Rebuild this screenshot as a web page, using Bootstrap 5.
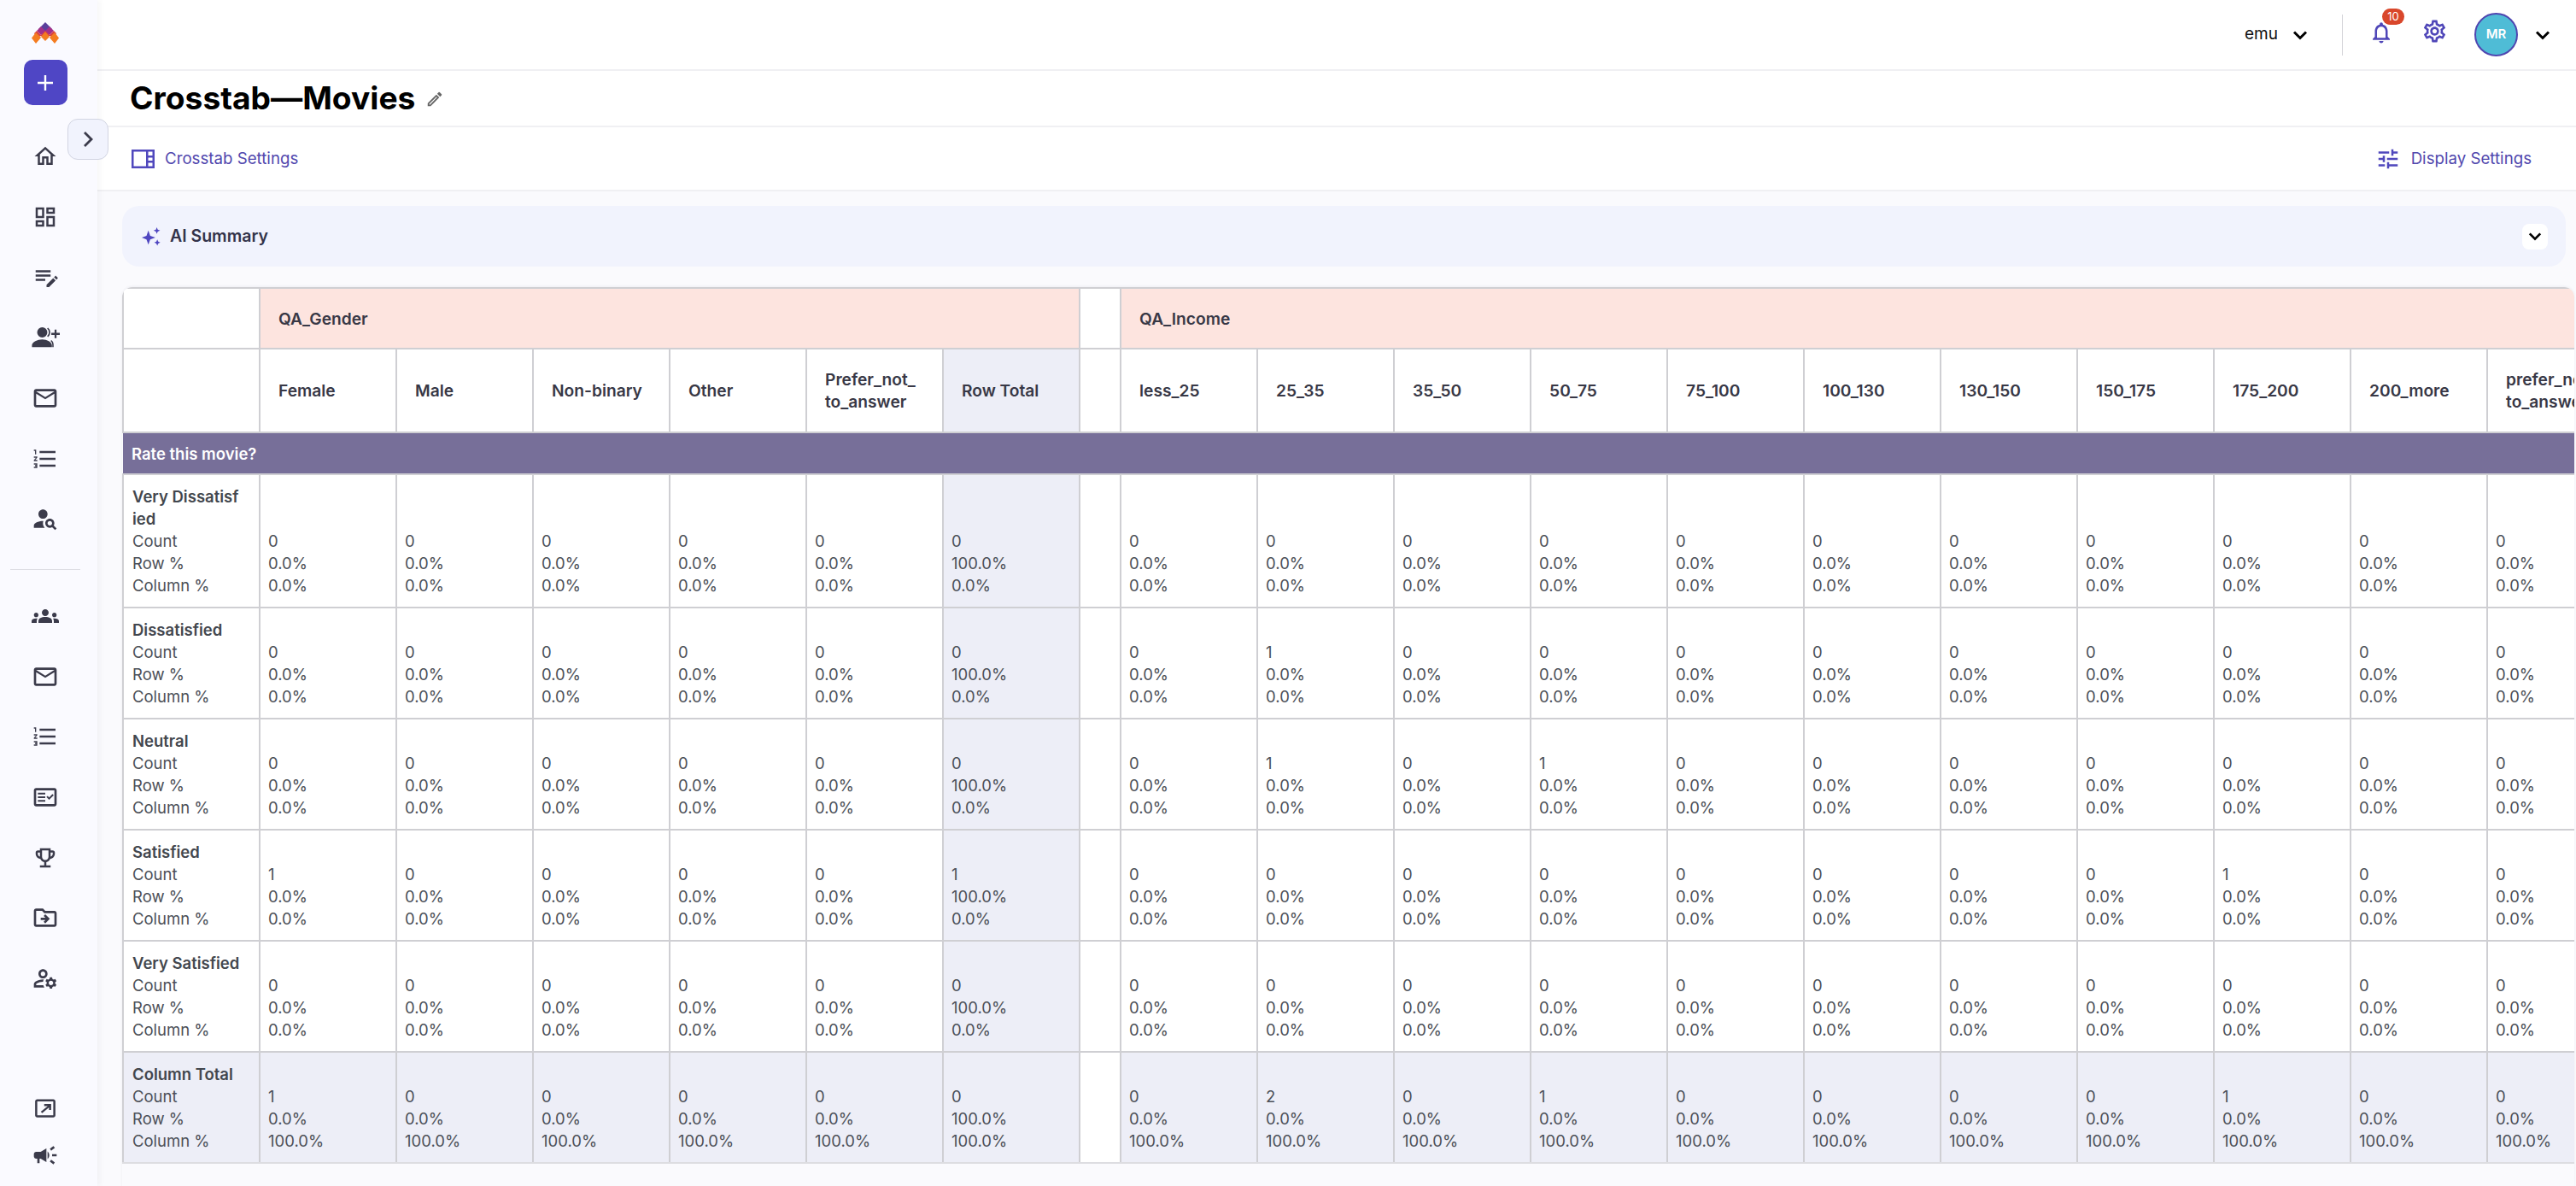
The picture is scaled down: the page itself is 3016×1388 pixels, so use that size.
<!DOCTYPE html>
<html lang="en">
<head>
  <meta charset="UTF-8" />
  <meta name="viewport" content="width=device-width, initial-scale=1" />
  <title>Crosstab - Movies</title>
  <link href="https://cdn.jsdelivr.net/npm/bootstrap@5.3.0/dist/css/bootstrap.min.css" rel="stylesheet" />
  <style>
    html, body { height: 100%; }
    body {
      font-family: Inter, "Liberation Sans", sans-serif;
      font-size: 18px;
      background: #fafafd;
      overflow: hidden;
    }
    .app-wrap { height: 1388px; }

    /* sidebar */
    .side-rail {
      width: 114px;
      flex: 0 0 114px;
      background: #fafaff;
      box-shadow: 2px 0 8px rgba(30, 30, 60, .05);
      padding-top: 26px;
      padding-bottom: 9px;
      padding-right: 8px;
      position: relative;
      z-index: 2;
    }
    .logo-box { width: 32px; height: 25px; display: block; }
    .add-btn {
      width: 51px;
      height: 53px;
      margin-top: 19px;
      margin-bottom: 25px;
      background: #4f46c5;
      border-radius: 10px;
      border: 0;
    }
    .rail-item { height: 70.67px; color: #3b3b4b; }
    .rail-item svg, .rail-foot svg { fill: currentColor; }
    .rail-foot { height: 55px; color: #3b3b4b; }
    .rail-line { width: 82px; height: 1px; background: #dedee4; margin: 23px 0 19px; }
    .rail-toggle {
      position: absolute;
      left: 79px;
      top: 139px;
      width: 48px;
      height: 48px;
      background: #f1f3fd;
      border: 1px solid #d2d5e2;
      border-radius: 12px;
      padding: 0 0 4px;
    }

    /* header rows */
    .main-col { min-width: 0; }
    .top-strip { height: 84px; background: #fff; border-bottom: 2px solid #f0f0f3; padding-right: 30px; }
    .tenant-name { color: #111; font-size: 19px; font-weight: 400; margin-right: 17px; }
    .strip-sep { width: 1px; height: 48px; background: #d4d4d8; margin: 0 30px 0 40px; }
    .bell-box { position: relative; width: 30px; height: 30px; margin-top: -6px; color: #4f46b8; }
    .bell-count {
      position: absolute;
      left: 16px;
      top: -13px;
      width: 26px;
      height: 19px;
      border-radius: 10px;
      background: #d9472b;
      color: #fff;
      font-size: 13px;
      line-height: 19px;
      text-align: center;
    }
    .gear-box { color: #4f46b8; margin: -8px 0 0 32px; }
    .avatar-dot {
      width: 51px;
      height: 51px;
      margin: 0 20px 0 31px;
      border-radius: 50%;
      background: #4fbcd6;
      border: 2px solid #4f46b0;
      color: #fff;
      font-size: 15px;
      font-weight: 600;
    }
    .title-strip { height: 66px; background: #fff; border-bottom: 2px solid #f0f0f3; padding-left: 38px; }
    .page-title { font-size: 37.2px; font-weight: 700; color: #000; margin: 0; }
    .pencil-ic { color: #666; margin-left: 12px; margin-top: 2px; }
    .tool-strip { height: 76px; background: #fff; border-bottom: 2px solid #f0f0f3; padding: 0 52px 0 40px; }
    .tool-link { color: #5148ae; font-size: 18.7px; text-decoration: none; }
    .tool-link svg { fill: #5048bd; }

    /* content */
    .content-pane { padding: 17px 12px 0 29px; background: #fafafd; flex: 1 1 auto; min-height: 0; }
    .ai-box {
      height: 71px;
      background: #f1f3fd;
      border-radius: 20px;
      padding: 0 21px 0 23px;
      margin-bottom: 24px;
    }
    .ai-label { font-size: 19.5px; font-weight: 600; color: #33334a; margin-left: 11px; }
    .ai-toggle {
      width: 30px;
      height: 30px;
      background: #fff;
      border: 0;
      border-radius: 8px;
      padding: 0;
    }
    .tab-shell {
      margin-right: -10px;
      height: 1060px;
      overflow: hidden;
      border-radius: 12px 12px 0 0;
      box-shadow: 0 -1px 3px rgba(40, 40, 60, .06);
    }
    .table.xtab {
      --bs-table-bg: #fff;
      table-layout: fixed;
      width: 2928px;
      margin: 0;
      border-collapse: collapse;
      font-size: 18.5px;
      line-height: 26px;
    }
    .table.xtab th, .table.xtab td {
      border: 2px solid #cfcfd3;
      padding: 12px 9px;
      font-weight: 400;
      word-break: break-all;
      vertical-align: bottom;
      color: #4c5058;
    }
    .table.xtab .grp-head th, .table.xtab .col-head th {
      vertical-align: middle;
      padding: 0 21px;
      font-size: 19.2px;
      font-weight: 600;
      color: #383846;
      word-break: normal;
      overflow-wrap: anywhere;
    }
    .table.xtab .grp-head th { height: 71px; }
    .table.xtab .col-head th { height: 98px; }
    .table.xtab .rate-row td {
      --bs-table-bg: #776f99;
      height: 49px;
      padding: 0 10px;
      vertical-align: middle;
      font-weight: 600;
      color: #fff;
      border-left: 0;
      border-right: 0;
    }
    .table.xtab td.row-label { padding-left: 10px; padding-right: 19px; }
    .table.xtab .row-label b { font-weight: 600; color: #43474e; display: block; }
    .table.xtab .tone-pink { --bs-table-bg: #fde4df; }
    .table.xtab .tone-total { --bs-table-bg: #edeef7; }
    .table.xtab tr:last-child td { border-bottom-color: #dddde1; }
  </style>
</head>
<body>
  <svg class="d-none" xmlns="http://www.w3.org/2000/svg">
    <symbol id="i-home" viewBox="0 0 24 24"><path d="M12 5.69l5 4.5V18h-2v-6H9v6H7v-7.81l5-4.5M12 3L2 12h3v8h6v-6h2v6h6v-8h3L12 3z"/></symbol>
    <symbol id="i-dash" viewBox="0 0 24 24"><path d="M19 5v2h-4V5h4M9 5v6H5V5h4m10 8v6h-4v-6h4M9 17v2H5v-2h4M21 3h-8v6h8V3zM11 3H3v10h8V3zm10 8h-8v10h8V11zm-10 4H3v6h8v-6z"/></symbol>
    <symbol id="i-note" viewBox="0 0 24 24"><path d="M3 5h14v2H3zM3 9h14v2H3zM3 13h9v2H3zM13.2 20.8v-2.3l6.2-6.2 2.3 2.3-6.2 6.2zM20.2 11.500l1-1c.3-.3.7-.3 1 0l1.3 1.3c.3.3.3.7 0 1l-1 1z"/></symbol>
    <symbol id="i-adduser" viewBox="0 0 24 24"><path d="M9.500 12a4.200 4.200 0 1 0 0-8.400a4.200 4.200 0 0 0 0 8.400zM1 20v-1.700c0-2.600 4.600-4.800 8.500-4.800s8 2.200 8 4.800V20zM14.300 3.800a5 5 0 0 1 0 7.800l-.8-.8a4 4 0 0 0 0-6.200zM17 14.200c1.200.8 1.900 2.100 1.900 3.800v2h-1.100v-2c0-1.300-.5-2.300-1.400-3zM19.700 5.500h1.600v2.700H24v1.600h-2.700v2.700h-1.600V9.800H17V8.200h2.700z"/></symbol>
    <symbol id="i-mail" viewBox="0 0 24 24"><path d="M20 4H4c-1.100 0-2 .9-2 2v12c0 1.100.9 2 2 2h16c1.100 0 2-.9 2-2V6c0-1.100-.9-2-2-2zm0 14H4V8l8 5 8-5v10zm-8-7L4 6h16l-8 5z"/></symbol>
    <symbol id="i-numlist" viewBox="0 0 24 24"><path d="M2 17h2v.5H3v1h1v.5H2v1h3v-4H2v1zm1-9h1V4H2v1h1v3zm-1 3h1.800L2 13.100v.9h3v-1H3.200L5 10.900V10H2v1zm5-6v2h14V5H7zm0 14h14v-2H7v2zm0-6h14v-2H7v2z"/></symbol>
    <symbol id="i-usersearch" viewBox="0 0 24 24"><path d="M10 12c2.210 0 4-1.790 4-4s-1.790-4-4-4-4 1.790-4 4 1.790 4 4 4zM10.350 14.010C7.620 13.910 2 15.270 2 18v2h9.540c-2.470-2.760-1.230-5.890-1.190-5.990zM19.430 18.020c.36-.59.57-1.280.57-2.020 0-2.210-1.790-4-4-4s-4 1.790-4 4 1.790 4 4 4c.74 0 1.430-.22 2.020-.57L20.590 22 22 20.590l-2.570-2.570zM16 18c-1.100 0-2-.9-2-2s.9-2 2-2 2 .9 2 2-.9 2-2 2z"/></symbol>
    <symbol id="i-groups" viewBox="0 0 24 24"><path d="M12 12.750c1.630 0 3.070.39 4.240.9 1.080.48 1.760 1.560 1.760 2.730V18H6v-1.610c0-1.180.68-2.260 1.760-2.730 1.170-.52 2.610-.91 4.240-.91zM4 13c1.100 0 2-.9 2-2s-.9-2-2-2-2 .9-2 2 .9 2 2 2zm1.130 1.100c-.37-.06-.74-.1-1.130-.1-.99 0-1.930.21-2.780.58C.48 14.900 0 15.620 0 16.430V18h4.500v-1.610c0-.83.23-1.610.63-2.290zM20 13c1.100 0 2-.9 2-2s-.9-2-2-2-2 .9-2 2 .9 2 2 2zm4 3.430c0-.81-.48-1.530-1.220-1.850-.85-.37-1.790-.58-2.780-.58-.39 0-.76.04-1.130.1.4.68.63 1.460.63 2.290V18H24v-1.570zM12 6c1.660 0 3 1.340 3 3s-1.340 3-3 3-3-1.340-3-3 1.340-3 3-3z"/></symbol>
    <symbol id="i-task" viewBox="0 0 24 24"><path d="M20 4H4c-1.100 0-2 .9-2 2v12c0 1.100.9 2 2 2h16c1.100 0 2-.9 2-2V6c0-1.100-.9-2-2-2zm0 14H4V6h16v12zM5.500 8H12v1.500H5.500zM5.500 11.200H12v1.500H5.500zM5.500 14.500H12V16H5.500zM19.400 10.300l-1.100-1.100-2.900 2.900-1.300-1.300-1.100 1.100 2.400 2.400z"/></symbol>
    <symbol id="i-cup" viewBox="0 0 24 24"><path d="M19 5h-2V3H7v2H5c-1.100 0-2 .9-2 2v1c0 2.550 1.920 4.630 4.390 4.940.63 1.500 1.980 2.630 3.610 2.960V19H7v2h10v-2h-4v-3.100c1.630-.33 2.980-1.460 3.610-2.960C19.080 12.630 21 10.550 21 8V7c0-1.100-.9-2-2-2zM5 8V7h2v3.820C5.840 10.400 5 9.300 5 8zm7 6c-1.650 0-3-1.350-3-3V5h6v6c0 1.650-1.350 3-3 3zm7-6c0 1.300-.84 2.400-2 2.820V7h2v1z"/></symbol>
    <symbol id="i-folder" viewBox="0 0 24 24"><path d="M20 6h-8l-2-2H4c-1.100 0-2 .9-2 2v12c0 1.100.9 2 2 2h16c1.100 0 2-.9 2-2V8c0-1.100-.9-2-2-2zm0 12H4V6h5.170l2 2H20v10zM12.160 12H8v2h4.160l-1.590 1.590L11.990 17 16 13l-4.010-4-1.410 1.410z"/></symbol>
    <symbol id="i-usergear" viewBox="0 0 24 24"><path d="M4 18v-.65c0-.34.16-.66.41-.81C6.100 15.530 8.030 15 10 15c.03 0 .05 0 .08.01.1-.7.3-1.370.59-1.980-.22-.02-.44-.03-.67-.03-2.420 0-4.680.67-6.610 1.820-.88.52-1.390 1.500-1.390 2.530V20h9.260c-.42-.6-.75-1.280-.97-2H4zM10 12c2.210 0 4-1.790 4-4s-1.790-4-4-4-4 1.790-4 4 1.790 4 4 4zm0-6c1.100 0 2 .9 2 2s-.9 2-2 2-2-.9-2-2 .9-2 2-2zM20.750 16c0-.22-.03-.42-.06-.63l1.140-1.010-1-1.730-1.450.49c-.32-.27-.68-.48-1.080-.63L18 11h-2l-.3 1.490c-.4.15-.76.36-1.080.63l-1.450-.49-1 1.730 1.140 1.010c-.03.21-.06.41-.06.63s.03.42.06.63l-1.140 1.010 1 1.730 1.450-.49c.32.27.68.48 1.080.63L16 21h2l.3-1.490c.4-.15.76-.36 1.080-.63l1.450.49 1-1.730-1.140-1.010c.03-.21.06-.41.06-.63zM17 18c-1.100 0-2-.9-2-2s.9-2 2-2 2 .9 2 2-.9 2-2 2z"/></symbol>
    <symbol id="i-export" viewBox="0 0 24 24"><path d="M4.500 3.500h15c1.100 0 2 .9 2 2v13c0 1.100-.9 2-2 2h-15c-1.100 0-2-.9-2-2v-13c0-1.100.9-2 2-2zm0 2v13h15v-13zM7.800 15.200l6.500-5.200h-3.300V8h6.500v5.500h-2v-2.300l-6.400 5.300z"/></symbol>
    <symbol id="i-horn" viewBox="0 0 24 24"><path d="M18 11v2h4v-2h-4zm-2 6.610c.96.71 2.210 1.650 3.200 2.390.4-.53.8-1.070 1.200-1.600-.99-.74-2.240-1.680-3.200-2.400-.4.54-.8 1.080-1.200 1.610zM20.400 5.600c-.4-.53-.8-1.070-1.200-1.600-.99.74-2.240 1.680-3.200 2.400.4.53.8 1.070 1.200 1.600.96-.72 2.210-1.650 3.200-2.400zM4 9c-1.100 0-2 .9-2 2v2c0 1.100.9 2 2 2h1v4h2v-4h1l5 3V6L8 9H4zm11.500 3c0-1.330-.58-2.530-1.500-3.350v6.690c.92-.81 1.500-2.010 1.500-3.340z"/></symbol>
    <symbol id="i-tune" viewBox="0 0 24 24"><path d="M3 17v2h6v-2H3zM3 5v2h10V5H3zm10 16v-2h8v-2h-8v-2h-2v6h2zM7 9v2H3v2h4v2h2V9H7zm14 4v-2H11v2h10zm-6-4h2V7h4V5h-4V3h-2v6z"/></symbol>
    <symbol id="i-panel" viewBox="0 0 27 22"><path d="M0 0h27v22H0zm2.500 2.500v17H17v-17zm17 0V7H24.500V2.500zm0 7v3.500H24.500V9.500zm0 6v4H24.500v-4z" fill-rule="evenodd"/></symbol>
    <symbol id="i-bell" viewBox="0 0 24 24"><path d="M12 22c1.100 0 2-.9 2-2h-4c0 1.100.9 2 2 2zm6-6v-5c0-3.070-1.630-5.640-4.500-6.320V4c0-.83-.67-1.500-1.500-1.500s-1.500.67-1.500 1.500v.68C7.640 5.360 6 7.920 6 11v5l-2 2v1h16v-1l-2-2zm-2 1H8v-6c0-2.480 1.510-4.500 4-4.500s4 2.020 4 4.500v6z"/></symbol>
    <symbol id="i-gear" viewBox="0 0 24 24"><path d="M19.430 12.980c.04-.32.07-.64.07-.98 0-.34-.03-.66-.07-.98l2.110-1.650c.19-.15.24-.42.12-.64l-2-3.460c-.09-.16-.26-.25-.44-.25-.06 0-.12.01-.17.03l-2.490 1c-.52-.4-1.080-.73-1.690-.98l-.38-2.650C14.460 2.180 14.250 2 14 2h-4c-.25 0-.46.18-.49.42l-.38 2.650c-.61.25-1.170.59-1.690.98l-2.490-1c-.06-.02-.12-.03-.18-.03-.17 0-.34.09-.43.25l-2 3.460c-.13.22-.07.49.12.64l2.110 1.650c-.04.32-.07.65-.07.98 0 .33.03.66.07.98l-2.110 1.650c-.19.15-.24.42-.12.64l2 3.460c.09.16.26.25.44.25.06 0 .12-.01.17-.03l2.490-1c.52.4 1.080.73 1.690.98l.38 2.650c.03.24.24.42.49.42h4c.25 0 .46-.18.49-.42l.38-2.650c.61-.25 1.170-.59 1.690-.98l2.490 1c.06.02.12.03.18.03.17 0 .34-.09.43-.25l2-3.460c.12-.22.07-.49-.12-.64l-2.110-1.650zm-1.980-1.710c.04.31.05.52.05.73 0 .21-.02.43-.05.73l-.14 1.130.89.7 1.080.84-.7 1.210-1.270-.51-1.040-.42-.9.68c-.43.32-.84.56-1.250.73l-1.060.43-.16 1.130-.2 1.350h-1.400l-.19-1.350-.16-1.130-1.060-.43c-.43-.18-.83-.41-1.230-.71l-.91-.7-1.060.43-1.270.51-.7-1.210 1.080-.84.89-.7-.14-1.130c-.03-.31-.05-.54-.05-.74s.02-.43.05-.73l.14-1.130-.89-.7-1.080-.84.7-1.210 1.270.51 1.040.42.9-.68c.43-.32.84-.56 1.250-.73l1.060-.43.16-1.130.2-1.350h1.390l.19 1.350.16 1.130 1.060.43c.43.18.83.41 1.230.71l.91.7 1.060-.43 1.270-.51.7 1.210-1.070.85-.89.7.14 1.130zM12 8c-2.210 0-4 1.790-4 4s1.790 4 4 4 4-1.790 4-4-1.790-4-4-4zm0 6c-1.100 0-2-.9-2-2s.9-2 2-2 2 .9 2 2-.9 2-2 2z"/></symbol>
    <symbol id="i-pencil" viewBox="0 0 24 24"><path d="M3 17.250V21h3.750L17.810 9.940l-3.750-3.750L3 17.250zM5.920 19H5v-.92l9.060-9.060.92.92L5.920 19zM20.710 7.040a1 1 0 0 0 0-1.410l-2.340-2.340a1 1 0 0 0-1.410 0l-1.830 1.830 3.750 3.750 1.830-1.830z"/></symbol>
    <symbol id="i-spark" viewBox="0 0 20 20"><path d="M7 3.500l2 5.500 5.500 2-5.500 2-2 5.500L5 13l-5-2 5-2zM16 0l1 2.500 2.500 1-2.500 1-1 2.500-1-2.500-2.500-1 2.500-1zM16.500 13l1 2.200 2.200 1-2.200 1-1 2.300-1-2.300-2.200-1 2.200-1z"/></symbol>
    <symbol id="i-down" viewBox="0 0 18 12"><path d="M2 2.500l7 7 7-7" fill="none" stroke="currentColor" stroke-width="3"/></symbol>
  </svg>

  <div class="app-wrap d-flex">
    <aside class="side-rail d-flex flex-column align-items-center">
      <svg class="logo-box" viewBox="0 0 32 25">
        <polygon points="16,0 24,8 16,16 8,8" fill="#5a3f9c"/>
        <polygon points="11,5 16,10 21,5 26,10 21,15 16,12 11,15 6,10" fill="#a32f88"/>
        <polygon points="6,10 11,15 16,10 21,15 26,10 29,13 26,18 21,16 16,18 11,16 6,18 3,13" fill="#d8403f"/>
        <polygon points="5,12 11,18 5,25 0,18.500" fill="#f47c20"/>
        <polygon points="27,12 32,18.500 27,25 21,18" fill="#f47c20"/>
        <polygon points="16,11 21,17 16,22 11,17" fill="#f47c20"/>
      </svg>
      <button class="add-btn d-flex align-items-center justify-content-center" type="button" aria-label="Add">
        <svg width="20" height="20" viewBox="0 0 20 20"><path d="M10 1v18M1 10h18" stroke="#fff" stroke-width="2.400"/></svg>
      </button>
      <div class="rail-item d-flex align-items-center justify-content-center"><svg width="30" height="30"><use href="#i-home"/></svg></div>
      <div class="rail-item d-flex align-items-center justify-content-center"><svg width="30" height="30"><use href="#i-dash"/></svg></div>
      <div class="rail-item d-flex align-items-center justify-content-center"><svg width="30" height="30"><use href="#i-note"/></svg></div>
      <div class="rail-item d-flex align-items-center justify-content-center"><svg width="34" height="34"><use href="#i-adduser"/></svg></div>
      <div class="rail-item d-flex align-items-center justify-content-center"><svg width="32" height="32"><use href="#i-mail"/></svg></div>
      <div class="rail-item d-flex align-items-center justify-content-center"><svg width="32" height="32"><use href="#i-numlist"/></svg></div>
      <div class="rail-item d-flex align-items-center justify-content-center"><svg width="32" height="32"><use href="#i-usersearch"/></svg></div>
      <div class="rail-line"></div>
      <div class="rail-item d-flex align-items-center justify-content-center"><svg width="32" height="32"><use href="#i-groups"/></svg></div>
      <div class="rail-item d-flex align-items-center justify-content-center"><svg width="32" height="32"><use href="#i-mail"/></svg></div>
      <div class="rail-item d-flex align-items-center justify-content-center"><svg width="32" height="32"><use href="#i-numlist"/></svg></div>
      <div class="rail-item d-flex align-items-center justify-content-center"><svg width="32" height="32"><use href="#i-task"/></svg></div>
      <div class="rail-item d-flex align-items-center justify-content-center"><svg width="30" height="30"><use href="#i-cup"/></svg></div>
      <div class="rail-item d-flex align-items-center justify-content-center"><svg width="32" height="32"><use href="#i-folder"/></svg></div>
      <div class="rail-item d-flex align-items-center justify-content-center"><svg width="32" height="32"><use href="#i-usergear"/></svg></div>
      <div class="rail-foot d-flex align-items-center justify-content-center mt-auto"><svg width="30" height="30"><use href="#i-export"/></svg></div>
      <div class="rail-foot d-flex align-items-center justify-content-center"><svg width="32" height="32"><use href="#i-horn"/></svg></div>
      <button class="rail-toggle" type="button" aria-label="Expand">
        <svg width="12" height="20" viewBox="0 0 12 20"><path d="M2 2l8 8-8 8" fill="none" stroke="#3b3b4b" stroke-width="2.800"/></svg>
      </button>
    </aside>

    <div class="main-col flex-grow-1 d-flex flex-column">
      <div class="top-strip d-flex align-items-center justify-content-end">
        <span class="tenant-name">emu</span>
        <svg width="18" height="12" class="text-black"><use href="#i-down"/></svg>
        <span class="strip-sep"></span>
        <div class="bell-box">
          <svg width="30" height="30" fill="currentColor"><use href="#i-bell"/></svg>
          <span class="bell-count">10</span>
        </div>
        <svg class="gear-box" width="31" height="31" fill="currentColor"><use href="#i-gear"/></svg>
        <div class="avatar-dot d-flex align-items-center justify-content-center">MR</div>
        <svg width="18" height="12" class="text-black"><use href="#i-down"/></svg>
      </div>

      <div class="title-strip d-flex align-items-center">
        <h1 class="page-title">Crosstab—Movies</h1>
        <svg class="pencil-ic" width="22" height="22" fill="currentColor"><use href="#i-pencil"/></svg>
      </div>

      <div class="tool-strip d-flex align-items-center justify-content-between">
        <a class="tool-link d-flex align-items-center gap-2" href="#"><svg width="27" height="22" class="me-1"><use href="#i-panel"/></svg>Crosstab Settings</a>
        <a class="tool-link d-flex align-items-center gap-2" href="#"><svg width="30" height="30" class="me-1"><use href="#i-tune"/></svg>Display Settings</a>
      </div>

      <div class="content-pane">
        <div class="ai-box d-flex align-items-center">
          <svg width="22" height="22" fill="#4f46c0"><use href="#i-spark"/></svg>
          <span class="ai-label">AI Summary</span>
          <button class="ai-toggle ms-auto d-flex align-items-center justify-content-center" type="button" aria-label="Toggle">
            <svg width="16" height="11" class="text-black"><use href="#i-down"/></svg>
          </button>
        </div>

        <div class="tab-shell">
          <table class="table xtab" id="crosstab">
            <colgroup id="tabCols"></colgroup>
            <thead id="tabHead"></thead>
            <tbody id="tabBody"></tbody>
          </table>
        </div>
      </div>
    </div>
  </div>

  <script>
    const genero = ["Female", "Male", "Non-binary", "Other", "Prefer_not_<wbr>to_answer"];
    const renda = ["less_25", "25_35", "35_50", "50_75", "75_100", "100_130", "130_150", "150_175", "175_200", "200_more", "prefer_not_<wbr>to_answer"];

    // contagens fora de zero, por indice de coluna
    const linhas = [
      { nome: "Very Dissatisfied", g: {}, r: {} },
      { nome: "Dissatisfied", g: {}, r: { 1: 1 } },
      { nome: "Neutral", g: {}, r: { 1: 1, 3: 1 } },
      { nome: "Satisfied", g: { 0: 1 }, r: { 8: 1 } },
      { nome: "Very Satisfied", g: {}, r: {} },
    ];
    const totalG = { 0: 1 };
    const totalR = { 1: 2, 3: 1, 8: 1 };

    const celula = (n, rowPct, colPct, cls = "") =>
      `<td class="${cls}">${n}<br>${rowPct}<br>${colPct}</td>`;

    document.getElementById("tabCols").innerHTML =
      '<col style="width:160px">'.repeat(7) + '<col style="width:48px">' + '<col style="width:160px">'.repeat(11);

    document.getElementById("tabHead").innerHTML = `
      <tr class="grp-head">
        <th></th>
        <th colspan="6" class="tone-pink">QA_Gender</th>
        <th></th>
        <th colspan="11" class="tone-pink">QA_Income</th>
      </tr>
      <tr class="col-head">
        <th></th>
        ${genero.map(g => `<th>${g}</th>`).join("")}
        <th class="tone-total">Row Total</th>
        <th></th>
        ${renda.map(r => `<th>${r}</th>`).join("")}
      </tr>`;

    let corpo = `<tr class="rate-row"><td colspan="19">Rate this movie?</td></tr>`;
    linhas.forEach(l => {
      const total = l.g[0] || 0;
      corpo += `<tr>
        <td class="row-label"><b>${l.nome}</b>Count<br>Row %<br>Column %</td>
        ${genero.map((_, i) => celula(l.g[i] || 0, "0.0%", "0.0%")).join("")}
        ${celula(total, "100.0%", "0.0%", "tone-total")}
        <td></td>
        ${renda.map((_, i) => celula(l.r[i] || 0, "0.0%", "0.0%")).join("")}
      </tr>`;
    });
    corpo += `<tr>
      <td class="row-label tone-total"><b>Column Total</b>Count<br>Row %<br>Column %</td>
      ${genero.map((_, i) => celula(totalG[i] || 0, "0.0%", "100.0%", "tone-total")).join("")}
      ${celula(0, "100.0%", "100.0%", "tone-total")}
      <td></td>
      ${renda.map((_, i) => celula(totalR[i] || 0, "0.0%", "100.0%", "tone-total")).join("")}
    </tr>`;
    document.getElementById("tabBody").innerHTML = corpo;
  </script>
  <script src="https://cdn.jsdelivr.net/npm/bootstrap@5.3.0/dist/js/bootstrap.bundle.min.js"></script>
</body>
</html>
